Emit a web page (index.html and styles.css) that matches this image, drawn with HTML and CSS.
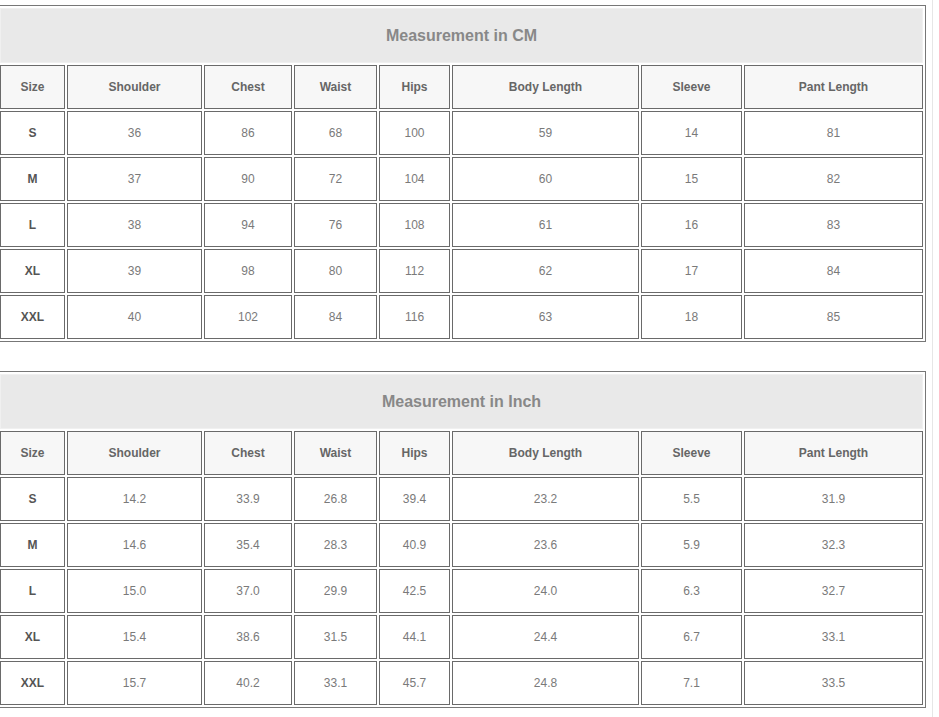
FILE: index.html
```html
<!DOCTYPE html>
<html>
<head>
<meta charset="utf-8">
<link rel="stylesheet" href="styles.css">
</head>
<body>
<div class="page">
  <table class="size-table">
    <colgroup>
      <col class="c-size"><col class="c-shoulder"><col class="c-chest"><col class="c-waist"><col class="c-hips"><col class="c-body"><col class="c-sleeve"><col class="c-pant">
    </colgroup>
    <tr><td class="title" colspan="8">Measurement in CM</td></tr>
    <tr class="head"><td>Size</td><td>Shoulder</td><td>Chest</td><td>Waist</td><td>Hips</td><td>Body Length</td><td>Sleeve</td><td>Pant Length</td></tr>
    <tr><td class="sz">S</td><td>36</td><td>86</td><td>68</td><td>100</td><td>59</td><td>14</td><td>81</td></tr>
    <tr><td class="sz">M</td><td>37</td><td>90</td><td>72</td><td>104</td><td>60</td><td>15</td><td>82</td></tr>
    <tr><td class="sz">L</td><td>38</td><td>94</td><td>76</td><td>108</td><td>61</td><td>16</td><td>83</td></tr>
    <tr><td class="sz">XL</td><td>39</td><td>98</td><td>80</td><td>112</td><td>62</td><td>17</td><td>84</td></tr>
    <tr><td class="sz">XXL</td><td>40</td><td>102</td><td>84</td><td>116</td><td>63</td><td>18</td><td>85</td></tr>
  </table>
  <table class="size-table second">
    <colgroup>
      <col class="c-size"><col class="c-shoulder"><col class="c-chest"><col class="c-waist"><col class="c-hips"><col class="c-body"><col class="c-sleeve"><col class="c-pant">
    </colgroup>
    <tr><td class="title" colspan="8">Measurement in Inch</td></tr>
    <tr class="head"><td>Size</td><td>Shoulder</td><td>Chest</td><td>Waist</td><td>Hips</td><td>Body Length</td><td>Sleeve</td><td>Pant Length</td></tr>
    <tr><td class="sz">S</td><td>14.2</td><td>33.9</td><td>26.8</td><td>39.4</td><td>23.2</td><td>5.5</td><td>31.9</td></tr>
    <tr><td class="sz">M</td><td>14.6</td><td>35.4</td><td>28.3</td><td>40.9</td><td>23.6</td><td>5.9</td><td>32.3</td></tr>
    <tr><td class="sz">L</td><td>15.0</td><td>37.0</td><td>29.9</td><td>42.5</td><td>24.0</td><td>6.3</td><td>32.7</td></tr>
    <tr><td class="sz">XL</td><td>15.4</td><td>38.6</td><td>31.5</td><td>44.1</td><td>24.4</td><td>6.7</td><td>33.1</td></tr>
    <tr><td class="sz">XXL</td><td>15.7</td><td>40.2</td><td>33.1</td><td>45.7</td><td>24.8</td><td>7.1</td><td>33.5</td></tr>
  </table>
</div>
</body>
</html>
```
FILE: styles.css
```css
html, body {
  margin: 0;
  padding: 0;
  background: #fff;
}
body {
  font-family: "Liberation Sans", Arial, sans-serif;
  overflow: hidden;
}
.page {
  width: 933px;
  height: 717px;
  border-right: 1px solid #e6e6e6;
  padding-top: 5px;
  box-sizing: border-box;
}
.size-table {
  table-layout: fixed;
  border-collapse: separate;
  border-spacing: 2px;
  border: 1px solid #777;
  width: 928px;
  margin-left: -3px;
}
.size-table.second {
  margin-top: 29px;
}
.c-size { width: 65px; }
.c-shoulder { width: 135px; }
.c-chest { width: 88px; }
.c-waist { width: 83px; }
.c-hips { width: 71px; }
.c-body { width: 187px; }
.c-sleeve { width: 101px; }
.c-pant { width: 179px; }
.size-table td {
  border: 1px solid #6a6a6a;
  height: 42px;
  padding: 0;
  text-align: center;
  vertical-align: middle;
  font-size: 12px;
  color: #7a7a7a;
  background: #fff;
}
.size-table td.title {
  height: 53px;
  background: #e9e9e9;
  border-color: #f0f0f0;
  font-size: 16px;
  font-weight: bold;
  color: #888;
}
.size-table tr.head td {
  background: #f7f7f7;
  font-weight: bold;
  color: #666;
}
.size-table td.sz {
  font-weight: bold;
  color: #555;
}
```
